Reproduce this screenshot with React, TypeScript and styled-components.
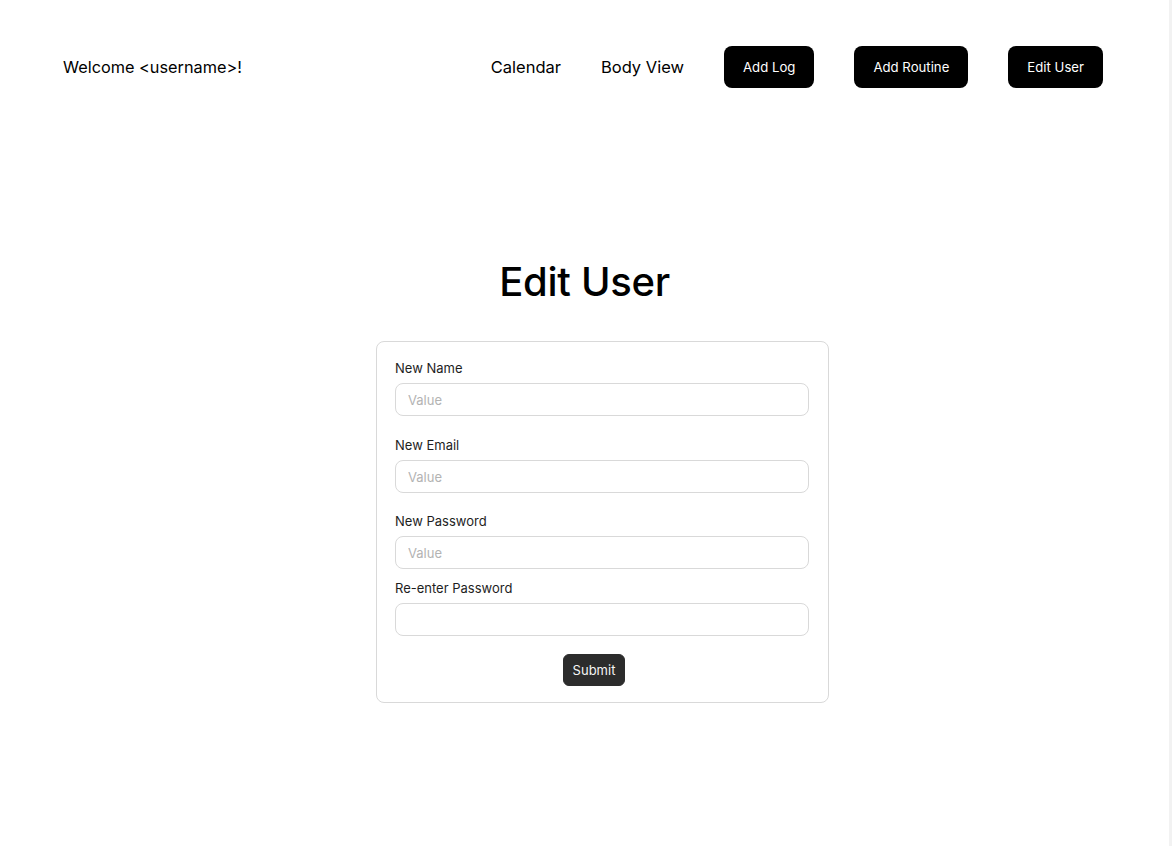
import React from "react";
import styled, { createGlobalStyle } from "styled-components";

const Global = createGlobalStyle`
  html, body { margin: 0; padding: 0; background: #ffffff; }
  body { font-family: Inter, "Noto Sans", "Liberation Sans", sans-serif; color: #000; }
  * { box-sizing: border-box; }
`;

const Shell = styled.div`
  display: flex;
  min-height: 100vh;
  width: 100%;
`;

const Page = styled.div`
  flex: 1;
  display: flex;
  flex-direction: column;
  background: #ffffff;
`;

const SideStrip = styled.div`
  width: 3px;
  background: #f2f2f2;
`;

const Header = styled.header`
  display: flex;
  align-items: center;
  justify-content: space-between;
  padding: 46px 66px 0 63px;
`;

const Welcome = styled.div`
  font-size: 16.3px;
  line-height: 20px;
  color: #000;
`;

const Nav = styled.nav`
  display: flex;
  align-items: center;
  gap: 40px;
`;

const NavLink = styled.a`
  font-size: 16.5px;
  line-height: 20px;
  color: #000;
  text-decoration: none;
  cursor: pointer;
`;

const NavButton = styled.button`
  height: 42px;
  padding: 0 19px;
  border: none;
  border-radius: 8px;
  background: #000;
  color: #fff;
  font-family: inherit;
  font-size: 13.2px;
  line-height: 20px;
  cursor: pointer;
`;

const Main = styled.main`
  display: flex;
  flex-direction: column;
  align-items: center;
  padding-top: 170px;
`;

const Title = styled.h1`
  margin: 0;
  font-size: 40px;
  line-height: 48px;
  font-weight: 500;
  letter-spacing: -0.3px;
  color: #000;
`;

const Card = styled.form`
  margin-top: 35px;
  margin-left: 36px;
  width: 453px;
  border: 1px solid #d9d9d9;
  border-radius: 8px;
  padding: 16px 19px 16px 18px;
  display: flex;
  flex-direction: column;
`;

const Field = styled.div<{ $gap: number }>`
  display: flex;
  flex-direction: column;
  gap: 5px;
  margin-top: ${(p) => p.$gap}px;
`;

const Label = styled.label`
  font-size: 13px;
  line-height: 20px;
  color: #1e1e1e;
`;

const Input = styled.input`
  height: 33px;
  width: 100%;
  border: 1px solid #d9d9d9;
  border-radius: 8px;
  padding: 0 12px;
  font-family: inherit;
  font-size: 13px;
  color: #1e1e1e;
  background: #fff;
  outline: none;
  &::placeholder { color: #b3b3b3; }
`;

const SubmitRow = styled.div`
  display: flex;
  justify-content: center;
  margin-top: 18px;
  padding-right: 16px;
`;

const Submit = styled.button`
  height: 32px;
  padding: 0 9px;
  border: 1px solid #2c2c2c;
  border-radius: 6px;
  background: #2c2c2c;
  color: #f5f5f5;
  font-family: inherit;
  font-size: 13px;
  line-height: 20px;
  cursor: pointer;
`;

const fields = [
  { label: "New Name", placeholder: "Value", gap: 0 },
  { label: "New Email", placeholder: "Value", gap: 19 },
  { label: "New Password", placeholder: "Value", gap: 18 },
  { label: "Re-enter Password", placeholder: "", gap: 9 },
];

export default function App() {
  return (
    <>
      <Global />
      <Shell>
        <Page>
          <Header>
            <Welcome>Welcome &lt;username&gt;!</Welcome>
            <Nav>
              <NavLink>Calendar</NavLink>
              <NavLink>Body View</NavLink>
              <NavButton>Add Log</NavButton>
              <NavButton>Add Routine</NavButton>
              <NavButton>Edit User</NavButton>
            </Nav>
          </Header>
          <Main>
            <Title>Edit User</Title>
            <Card onSubmit={(e) => e.preventDefault()}>
              {fields.map((f) => (
                <Field key={f.label} $gap={f.gap}>
                  <Label>{f.label}</Label>
                  <Input placeholder={f.placeholder} />
                </Field>
              ))}
              <SubmitRow>
                <Submit type="submit">Submit</Submit>
              </SubmitRow>
            </Card>
          </Main>
        </Page>
        <SideStrip />
      </Shell>
    </>
  );
}
